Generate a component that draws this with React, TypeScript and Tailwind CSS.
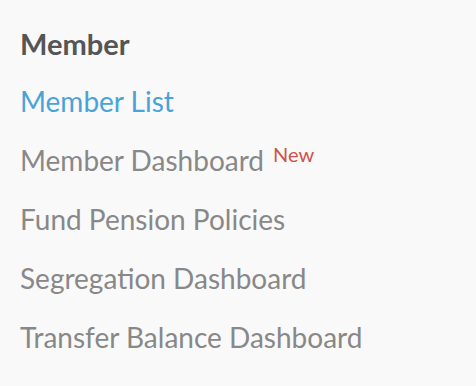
import React from 'react';

export default function App() {
  const links = [
    { name: 'Member List', active: true },
    { name: 'Member Dashboard', isNew: true },
    { name: 'Fund Pension Policies' },
    { name: 'Segregation Dashboard' },
    { name: 'Transfer Balance Dashboard' },
  ];

  return (
    <div className="w-[476px] h-[386px] bg-[#f9f9f9] px-5 pt-[28px]" style={{ fontFamily: 'Lato, "Open Sans", sans-serif' }}>
      <h2 className="text-[29px] leading-[32px] font-bold text-[#555555]">Member</h2>
      <ul className="mt-[25px] flex flex-col gap-[27px]">
        {links.map((item) => (
          <li key={item.name} className="text-[28px] leading-[32px] whitespace-nowrap">
            <a className={item.active ? 'text-[#4aa3d8]' : 'text-[#888888]'}>{item.name}</a>
            {item.isNew && (
              <span className="ml-[9px] text-[20px] leading-none text-[#d0524c] relative -top-[9px]">New</span>
            )}
          </li>
        ))}
      </ul>
    </div>
  );
}
